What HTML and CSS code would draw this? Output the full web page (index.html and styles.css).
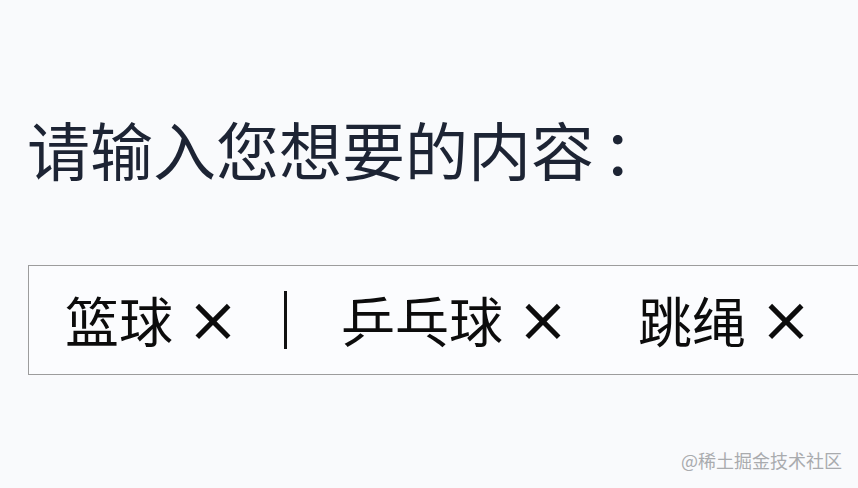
FILE: index.html
```html
<!DOCTYPE html>
<html lang="zh-CN">
<head>
<meta charset="utf-8">
<title>标签输入</title>
<link rel="stylesheet" href="styles.css">
</head>
<body>
<main class="page">
  <h1 class="title">请输入您想要的内容<span class="colon">：</span></h1>
  <div class="tag-input">
    <span class="tag"><span class="tag-text">篮球</span><span class="tag-close">×</span></span>
    <span class="caret"></span>
    <span class="tag"><span class="tag-text">乒乓球</span><span class="tag-close">×</span></span>
    <span class="tag"><span class="tag-text">跳绳</span><span class="tag-close">×</span></span>
  </div>
</main>
<div class="watermark">@稀土掘金技术社区</div>
</body>
</html>
```

FILE: styles.css
```css
html, body {
  margin: 0;
  padding: 0;
}
body {
  width: 858px;
  height: 488px;
  overflow: hidden;
  background: #f9fafc;
  font-family: "Noto Sans CJK SC", "Noto Sans", sans-serif;
  position: relative;
}
.page {
  padding: 116px 0 0 27px;
}
.title {
  margin: 0;
  font-size: 63px;
  line-height: 63px;
  font-weight: 400;
  color: #1d2434;
  letter-spacing: 0;
}
.colon {
  margin-left: 8px;
}
.tag-input {
  margin-top: 86px;
  margin-left: 1px;
  width: 900px;
  height: 110px;
  box-sizing: border-box;
  border: 1.5px solid #9c9c9c;
  background: #fbfcfe;
  display: flex;
  align-items: center;
  padding-left: 36px;
}
.tag {
  display: flex;
  align-items: center;
  color: #0c0c0c;
}
.tag-text {
  font-size: 54px;
  line-height: 54px;
}
.tag-close {
  font-family: "DejaVu Sans", sans-serif;
  font-size: 62px;
  line-height: 54px;
  margin-left: 14px;
}
.caret {
  width: 3px;
  height: 58px;
  background: #111;
  margin: 0 54px 0 45px;
}
.tag + .tag {
  margin-left: 69px;
}
.watermark {
  position: absolute;
  right: 16px;
  bottom: 15px;
  font-size: 18px;
  color: #a9abae;
  letter-spacing: 0;
}
```
